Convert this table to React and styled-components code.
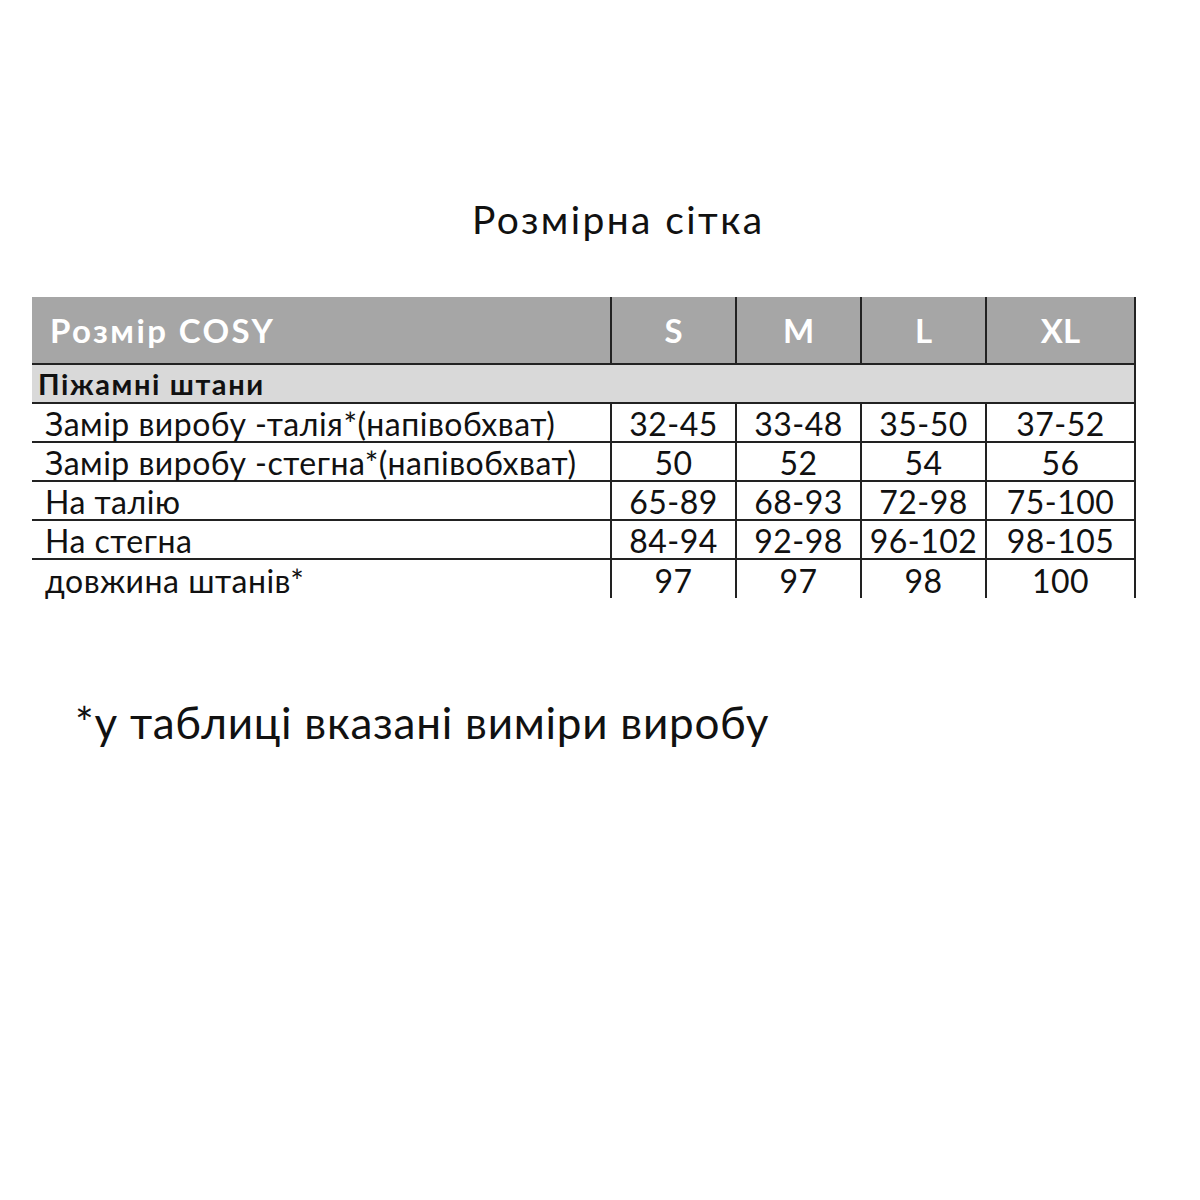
import React from 'react';
import styled, { createGlobalStyle } from 'styled-components';

const GlobalStyle = createGlobalStyle`
  body {
    margin: 0;
    background: #fff;
  }
`;

const Page = styled.main`
  width: 1200px;
  height: 1200px;
  background: #fff;
  display: flex;
  flex-direction: column;
`;

const Title = styled.h1`
  margin: 196px 0 0 472px;
  height: 101px;
  font-family: Lato, "Liberation Sans", sans-serif;
  font-weight: 400;
  font-size: 39px;
  line-height: 46px;
  color: #111;
  letter-spacing: 2.4px;
`;

const Table = styled.div`
  margin-left: 32px;
  width: 1104px;
  display: grid;
  grid-template-columns: 580px 125px 125px 125px 149px;
  font-family: Lato, "Open Sans", sans-serif;
  color: #111;
`;

const HeadCell = styled.div`
  height: 68px;
  background: #a6a6a6;
  color: #fff;
  font-weight: 700;
  font-size: 33px;
  letter-spacing: ${(p) => (p.$first ? '2.4px' : '0')};
  display: flex;
  align-items: center;
  justify-content: ${(p) => (p.$first ? 'flex-start' : 'center')};
  padding-left: ${(p) => (p.$first ? '18px' : '0')};
  border-right: 2px solid #222;
  border-bottom: 2px solid #222;
  box-sizing: border-box;
`;

const SectionRow = styled.div`
  grid-column: 1 / -1;
  height: 39px;
  background: #d9d9d9;
  font-weight: 700;
  font-size: 29px;
  letter-spacing: 1.6px;
  display: flex;
  align-items: center;
  padding-left: 6px;
  box-sizing: border-box;
  border-right: 2px solid #222;
  border-bottom: 2px solid #222;
`;

const Cell = styled.div`
  height: ${(p) => (p.$last ? '38px' : '39px')};
  font-size: 32px;
  line-height: 32px;
  letter-spacing: 0.5px;
  display: flex;
  align-items: flex-end;
  justify-content: ${(p) => (p.$label ? 'flex-start' : 'center')};
  padding-left: ${(p) => (p.$label ? '13px' : '0')};
  padding-bottom: 1px;
  border-right: 2px solid #222;
  border-bottom: ${(p) => (p.$last ? 'none' : '2px solid #222')};
  box-sizing: border-box;
  white-space: nowrap;
`;

const Note = styled.p`
  margin: 98px 0 0 75px;
  font-family: Lato, "Liberation Sans", sans-serif;
  font-size: 44px;
  line-height: 52px;
  letter-spacing: 0.75px;
  color: #111;
`;

const sizes = ['S', 'M', 'L', 'XL'];

const rows = [
  ['Замір виробу -талія*(напівобхват)', '32-45', '33-48', '35-50', '37-52'],
  ['Замір виробу -стегна*(напівобхват)', '50', '52', '54', '56'],
  ['На талію', '65-89', '68-93', '72-98', '75-100'],
  ['На стегна', '84-94', '92-98', '96-102', '98-105'],
  ['довжина штанів*', '97', '97', '98', '100'],
];

function App() {
  return (
    <>
      <GlobalStyle />
      <Page>
        <Title>Розмірна сітка</Title>
        <Table>
          <HeadCell $first>Розмір COSY</HeadCell>
          {sizes.map((s) => (
            <HeadCell key={s}>{s}</HeadCell>
          ))}
          <SectionRow>Піжамні штани</SectionRow>
          {rows.map((row, i) =>
            row.map((value, j) => (
              <Cell
                key={`${i}-${j}`}
                $label={j === 0}
                $last={i === rows.length - 1}
              >
                {value}
              </Cell>
            ))
          )}
        </Table>
        <Note>*у таблиці вказані виміри виробу</Note>
      </Page>
    </>
  );
}

export default App;
